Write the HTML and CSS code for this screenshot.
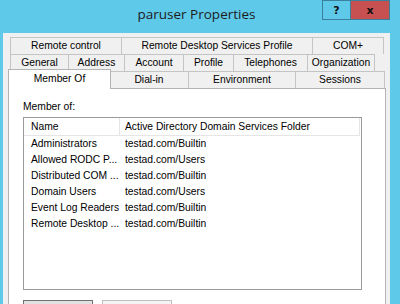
FILE: index.html
```html
<!DOCTYPE html>
<html lang="en">
  <head>
    <meta charset="UTF-8" />
    <meta name="viewport" content="width=device-width, initial-scale=1.0" />
    <title>paruser Properties</title>
    <link rel="stylesheet" href="styles.css">
  </head>
  <body>
    <div class="window">
      <div class="titlebar">
        <span class="title">paruser Properties</span>
        <div class="captionButtons">
          <button class="helpBtn">?</button>
          <button class="closeBtn">x</button>
        </div>
      </div>
      <div class="client">
        <div class="tabs">
          <div class="tabRow row1">
            <div class="tab">Remote control</div>
            <div class="tab">Remote Desktop Services Profile</div>
            <div class="tab">COM+</div>
          </div>
          <div class="tabRow row2">
            <div class="tab">General</div>
            <div class="tab">Address</div>
            <div class="tab">Account</div>
            <div class="tab">Profile</div>
            <div class="tab">Telephones</div>
            <div class="tab">Organization</div>
          </div>
          <div class="tabRow row3">
            <div class="tab active">Member Of</div>
            <div class="tab">Dial-in</div>
            <div class="tab">Environment</div>
            <div class="tab">Sessions</div>
          </div>
        </div>
        <div class="panel">
          <div class="label">Member of:</div>
          <div class="listView">
            <div class="lvHeader">
              <span>Name</span>
              <span>Active Directory Domain Services Folder</span>
            </div>
            <div class="lvRow"><span>Administrators</span><span>testad.com/Builtin</span></div>
            <div class="lvRow"><span>Allowed RODC P...</span><span>testad.com/Users</span></div>
            <div class="lvRow"><span>Distributed COM ...</span><span>testad.com/Builtin</span></div>
            <div class="lvRow"><span>Domain Users</span><span>testad.com/Users</span></div>
            <div class="lvRow"><span>Event Log Readers</span><span>testad.com/Builtin</span></div>
            <div class="lvRow"><span>Remote Desktop ...</span><span>testad.com/Builtin</span></div>
          </div>
          <div class="buttons">
            <button class="push default" aria-label="Add"></button>
            <button class="push" aria-label="Remove" disabled></button>
          </div>
        </div>
      </div>
    </div>
  </body>
</html>
```

FILE: styles.css
```css
* {
  box-sizing: border-box;
}
body {
  margin: 0;
  background-color: #5fc9e9;
  font-family: "Liberation Sans", Arial, sans-serif;
  font-size: 10.3px;
  color: #000000;
  overflow: hidden;
}
.window {
  width: 400px;
  height: 304px;
}
.titlebar {
  height: 33px;
  position: relative;
}
.titlebar .title {
  display: block;
  padding-right: 7px;
  text-align: center;
  font-family: "Open Sans", sans-serif;
  font-size: 13.5px;
  line-height: 28px;
  color: #1c1c1c;
}
.captionButtons {
  position: absolute;
  top: 0;
  right: 10px;
  display: flex;
}
.captionButtons button {
  height: 20px;
  margin: 0;
  padding: 0;
  border: 1px solid #3a7f9c;
  font-family: "DejaVu Sans", sans-serif;
  font-weight: bold;
  font-size: 11px;
  color: #111111;
}
.helpBtn {
  width: 29px;
  background-color: #5fc9e9;
}
.closeBtn {
  width: 40px;
  margin-left: -1px !important;
  background-color: #c75050;
}
.client {
  width: 387px;
  height: 271px;
  margin-left: 3px;
  padding-top: 4px;
  background-color: #f0f0f0;
}
.tabs {
  padding-left: 7px;
}
.tabRow {
  display: grid;
  height: 17px;
}
.row1 {
  grid-template-columns: 111px 191px 72px;
}
.row2 {
  grid-template-columns: 58px 56px 59px 50px 74px 68px;
}
.row3 {
  grid-template-columns: 99px 79px 107px 90px;
}
.tab {
  border: 1px solid #c4c4c4;
  border-width: 1px 0 0 1px;
  background-color: #f0f0f0;
  text-align: center;
  line-height: 15px;
  white-space: nowrap;
}
.tab:last-child {
  border-right-width: 1px;
}
.tab.active {
  position: relative;
  z-index: 1;
  margin: -2px -2px -1px -2px;
  border-width: 1px;
  border-bottom: none;
  border-color: #b4b4b4;
  background-color: #ffffff;
  line-height: 17px;
}
.panel {
  width: 378px;
  height: 220px;
  margin-left: 5px;
  padding: 11px 0 0 14px;
  border: 1px solid #b4b4b4;
  background-color: #ffffff;
}
.label {
  line-height: 13px;
}
.listView {
  width: 339px;
  height: 173px;
  margin-top: 4px;
  border: 1px solid #9a9a9a;
}
.lvHeader,
.lvRow {
  display: grid;
  grid-template-columns: 96px 240px;
  white-space: nowrap;
}
.lvHeader {
  height: 18px;
  line-height: 17px;
}
.lvHeader span {
  border-right: 1px solid #e5e5e5;
  border-bottom: 1px solid #e5e5e5;
}
.lvRow {
  height: 16px;
  line-height: 16px;
}
.lvHeader span:first-child,
.lvRow span:first-child {
  padding-left: 7px;
  overflow: hidden;
}
.lvHeader span:last-child,
.lvRow span:last-child {
  padding-left: 5px;
}
.buttons {
  display: flex;
  gap: 9px;
  margin-top: 10px;
}
.push {
  width: 70px;
  height: 23px;
  margin: 0;
  border: 1px solid #adadad;
  background-color: #e1e1e1;
}
.push.default {
  border-color: #707070;
}
.push:disabled {
  border-color: #bfbfbf;
  background-color: #f4f4f4;
}
```
